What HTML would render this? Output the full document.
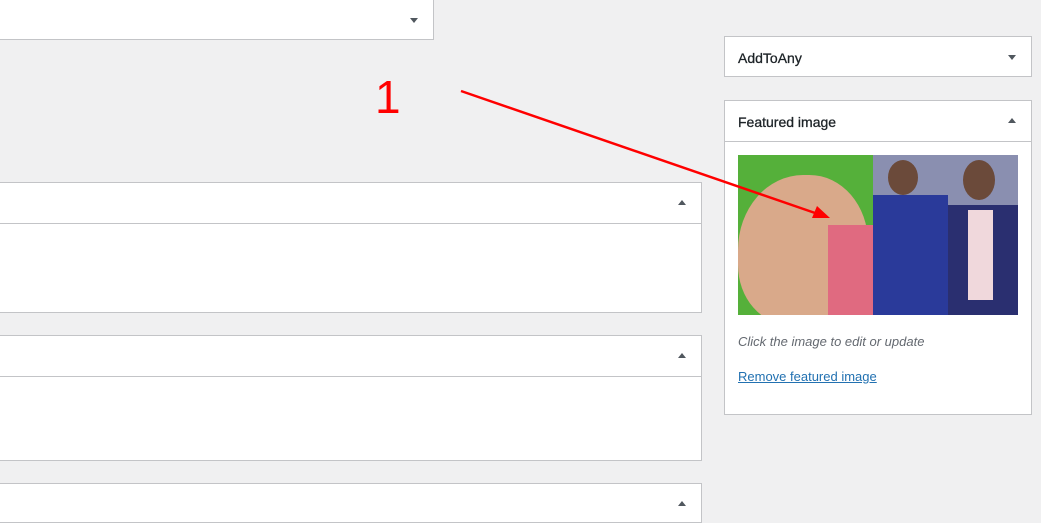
<!DOCTYPE html>
<html><head><style>
body{margin:0;width:1041px;height:511px;background:#f0f0f1;position:relative;overflow:hidden;font-family:"Liberation Sans",sans-serif}
.box{position:absolute;background:#fff;border:1px solid #c3c4c7;box-sizing:border-box}
.hd{position:absolute;left:0;right:0;top:0;border-bottom:1px solid #c3c4c7}
.tri{position:absolute;width:0;height:0;border-left:4px solid transparent;border-right:4px solid transparent}
.up{border-bottom:5px solid #50575e}.dn{border-top:5px solid #50575e}
.t{position:absolute;left:13px;font-size:14px;color:#1d2327;-webkit-text-stroke:0.3px #1d2327}
</style></head><body>
<div class="box" style="left:-2px;top:-2px;width:436px;height:42px"><div class="tri dn" style="left:411px;top:19px"></div></div>
<div class="box" style="left:-2px;top:182px;width:704px;height:131px"><div class="hd" style="height:40px"></div><div class="tri up" style="left:679px;top:17px"></div></div>
<div class="box" style="left:-2px;top:335px;width:704px;height:126px"><div class="hd" style="height:40px"></div><div class="tri up" style="left:679px;top:17px"></div></div>
<div class="box" style="left:-2px;top:483px;width:704px;height:40px"><div class="tri up" style="left:679px;top:17px"></div></div>
<div class="box" style="left:724px;top:36px;width:308px;height:41px"><div class="t" style="top:13px">AddToAny</div><div class="tri dn" style="left:283px;top:18px"></div></div>
<div class="box" style="left:724px;top:100px;width:308px;height:315px">
<div class="hd" style="height:40px"></div><div class="t" style="top:13px">Featured image</div><div class="tri up" style="left:283px;top:17px"></div>
<div style="position:absolute;left:13px;top:54px;width:280px;height:160px;overflow:hidden;background:#55b03a">
<div style="position:absolute;left:0;top:20px;width:130px;height:150px;background:#d9a98a;border-radius:50% 45% 30% 40%"></div>
<div style="position:absolute;left:90px;top:70px;width:45px;height:90px;background:#e06a80"></div>
<div style="position:absolute;left:135px;top:0;width:145px;height:160px;background:#8a8fb0"></div>
<div style="position:absolute;left:135px;top:40px;width:75px;height:120px;background:#2a3a9a"></div>
<div style="position:absolute;left:210px;top:50px;width:70px;height:110px;background:#2a2f70"></div>
<div style="position:absolute;left:230px;top:55px;width:25px;height:90px;background:#f0d8dc"></div>
<div style="position:absolute;left:150px;top:5px;width:30px;height:35px;background:#6b4a3a;border-radius:50%"></div>
<div style="position:absolute;left:225px;top:5px;width:32px;height:40px;background:#6b4a3a;border-radius:50%"></div>
</div>
<div style="position:absolute;left:13px;top:233px;font-size:13px;font-style:italic;color:#646970">Click the image to edit or update</div>
<div style="position:absolute;left:13px;top:268px;font-size:13px;color:#2271b1;text-decoration:underline">Remove featured image</div>
</div>
<div style="position:absolute;left:375px;top:74px;font-size:46px;color:#f00;line-height:1">1</div>
<svg style="position:absolute;left:0;top:0" width="1041" height="511"><line x1="461" y1="91" x2="818" y2="214" stroke="#f00" stroke-width="2.5"/><polygon points="830,218 812,218 817,206" fill="#f00"/></svg>
</body></html>
